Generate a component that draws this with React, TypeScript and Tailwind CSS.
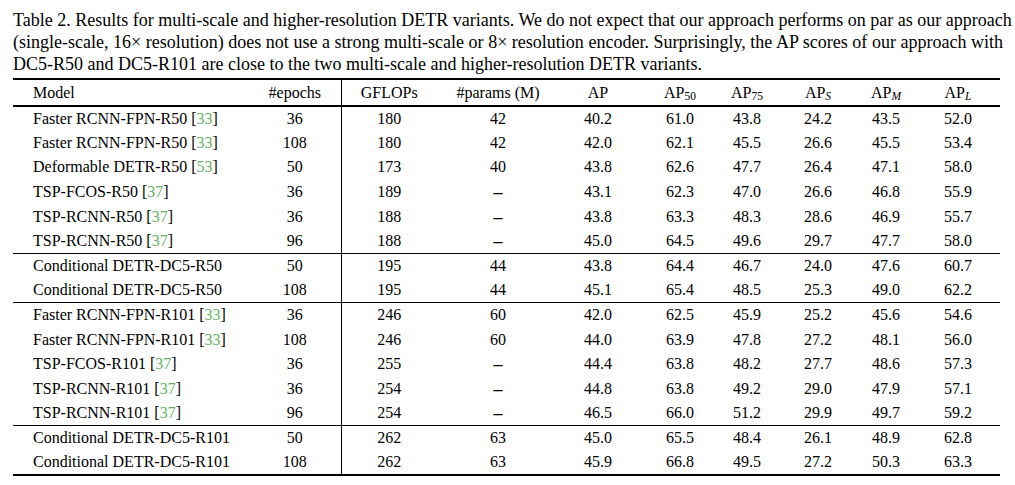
import React from "react"

type Row = {
  model: string
  cite?: string
  epochs: string
  gflops: string
  params: string
  ap: string[]
}

const groups: Row[][] = [
  [
    { model: "Faster RCNN-FPN-R50", cite: "33", epochs: "36", gflops: "180", params: "42", ap: ["40.2", "61.0", "43.8", "24.2", "43.5", "52.0"] },
    { model: "Faster RCNN-FPN-R50", cite: "33", epochs: "108", gflops: "180", params: "42", ap: ["42.0", "62.1", "45.5", "26.6", "45.5", "53.4"] },
    { model: "Deformable DETR-R50", cite: "53", epochs: "50", gflops: "173", params: "40", ap: ["43.8", "62.6", "47.7", "26.4", "47.1", "58.0"] },
    { model: "TSP-FCOS-R50", cite: "37", epochs: "36", gflops: "189", params: "–", ap: ["43.1", "62.3", "47.0", "26.6", "46.8", "55.9"] },
    { model: "TSP-RCNN-R50", cite: "37", epochs: "36", gflops: "188", params: "–", ap: ["43.8", "63.3", "48.3", "28.6", "46.9", "55.7"] },
    { model: "TSP-RCNN-R50", cite: "37", epochs: "96", gflops: "188", params: "–", ap: ["45.0", "64.5", "49.6", "29.7", "47.7", "58.0"] },
  ],
  [
    { model: "Conditional DETR-DC5-R50", epochs: "50", gflops: "195", params: "44", ap: ["43.8", "64.4", "46.7", "24.0", "47.6", "60.7"] },
    { model: "Conditional DETR-DC5-R50", epochs: "108", gflops: "195", params: "44", ap: ["45.1", "65.4", "48.5", "25.3", "49.0", "62.2"] },
  ],
  [
    { model: "Faster RCNN-FPN-R101", cite: "33", epochs: "36", gflops: "246", params: "60", ap: ["42.0", "62.5", "45.9", "25.2", "45.6", "54.6"] },
    { model: "Faster RCNN-FPN-R101", cite: "33", epochs: "108", gflops: "246", params: "60", ap: ["44.0", "63.9", "47.8", "27.2", "48.1", "56.0"] },
    { model: "TSP-FCOS-R101", cite: "37", epochs: "36", gflops: "255", params: "–", ap: ["44.4", "63.8", "48.2", "27.7", "48.6", "57.3"] },
    { model: "TSP-RCNN-R101", cite: "37", epochs: "36", gflops: "254", params: "–", ap: ["44.8", "63.8", "49.2", "29.0", "47.9", "57.1"] },
    { model: "TSP-RCNN-R101", cite: "37", epochs: "96", gflops: "254", params: "–", ap: ["46.5", "66.0", "51.2", "29.9", "49.7", "59.2"] },
  ],
  [
    { model: "Conditional DETR-DC5-R101", epochs: "50", gflops: "262", params: "63", ap: ["45.0", "65.5", "48.4", "26.1", "48.9", "62.8"] },
    { model: "Conditional DETR-DC5-R101", epochs: "108", gflops: "262", params: "63", ap: ["45.9", "66.8", "49.5", "27.2", "50.3", "63.3"] },
  ],
]

// column widths in px, taken from the paper layout
const colWidths = [236, 92, 96, 122, 78, 86, 48, 94, 42, 93]

function AP({ sub, italic }: { sub?: string; italic?: boolean }) {
  return (
    <span>
      AP
      {sub && <sub className={italic ? "text-[11.5px] italic" : "text-[11.5px]"}>{sub}</sub>}
    </span>
  )
}

export default function App() {
  const serif = "font-['Liberation_Serif','Times_New_Roman',serif]"

  return (
    <div className={`w-[1015px] h-[485px] bg-white text-black ${serif} pt-[9px] px-[13px]`}>
      {/* Caption */}
      <div className="w-[990px] text-[18px] leading-[22px]">
        <div className="text-justify [text-align-last:justify] whitespace-nowrap">
          Table 2. Results for multi-scale and higher-resolution DETR variants. We do not expect that our approach performs on par as our approach
        </div>
        <div className="text-justify [text-align-last:justify] whitespace-nowrap">
          (single-scale, 16× resolution) does not use a strong multi-scale or 8× resolution encoder. Surprisingly, the AP scores of our approach with
        </div>
        <div>DC5-R50 and DC5-R101 are close to the two multi-scale and higher-resolution DETR variants.</div>
      </div>

      {/* Table */}
      <table className="mt-[3px] w-[987px] table-fixed border-collapse text-[16px] leading-none">
        <colgroup>
          {colWidths.map((w, i) => (
            <col key={i} style={{ width: w }} />
          ))}
        </colgroup>
        <thead>
          <tr className="h-[27px] border-t-2 border-b-2 border-black">
            <th className="pl-[20px] text-left font-normal">Model</th>
            <th className="font-normal border-r border-black">#epochs</th>
            <th className="font-normal">GFLOPs</th>
            <th className="font-normal">#params (M)</th>
            <th className="font-normal"><AP /></th>
            <th className="font-normal"><AP sub="50" /></th>
            <th className="font-normal"><AP sub="75" /></th>
            <th className="font-normal"><AP sub="S" italic /></th>
            <th className="font-normal"><AP sub="M" italic /></th>
            <th className="font-normal pl-[9px]"><AP sub="L" italic /></th>
          </tr>
        </thead>
        {groups.map((rows, gi) => (
          <tbody key={gi} className={gi === groups.length - 1 ? "border-b-2 border-black" : "border-b border-black"}>
            {rows.map((r, ri) => (
              <tr key={ri} className="h-[24.6px]">
                <td className="pl-[20px] whitespace-nowrap">
                  {r.model}
                  {r.cite && (
                    <>
                      {" "}[<span className="text-[#5fb35f]">{r.cite}</span>]
                    </>
                  )}
                </td>
                <td className="text-center border-r border-black">{r.epochs}</td>
                <td className="text-center">{r.gflops}</td>
                <td className="text-center">
                  {r.params === "–" ? <span className="font-bold text-[18px]">–</span> : r.params}
                </td>
                {r.ap.map((v, i) => (
                  <td key={i} className={i === 5 ? "text-center pl-[9px]" : "text-center"}>
                    {v}
                  </td>
                ))}
              </tr>
            ))}
          </tbody>
        ))}
      </table>
    </div>
  )
}
